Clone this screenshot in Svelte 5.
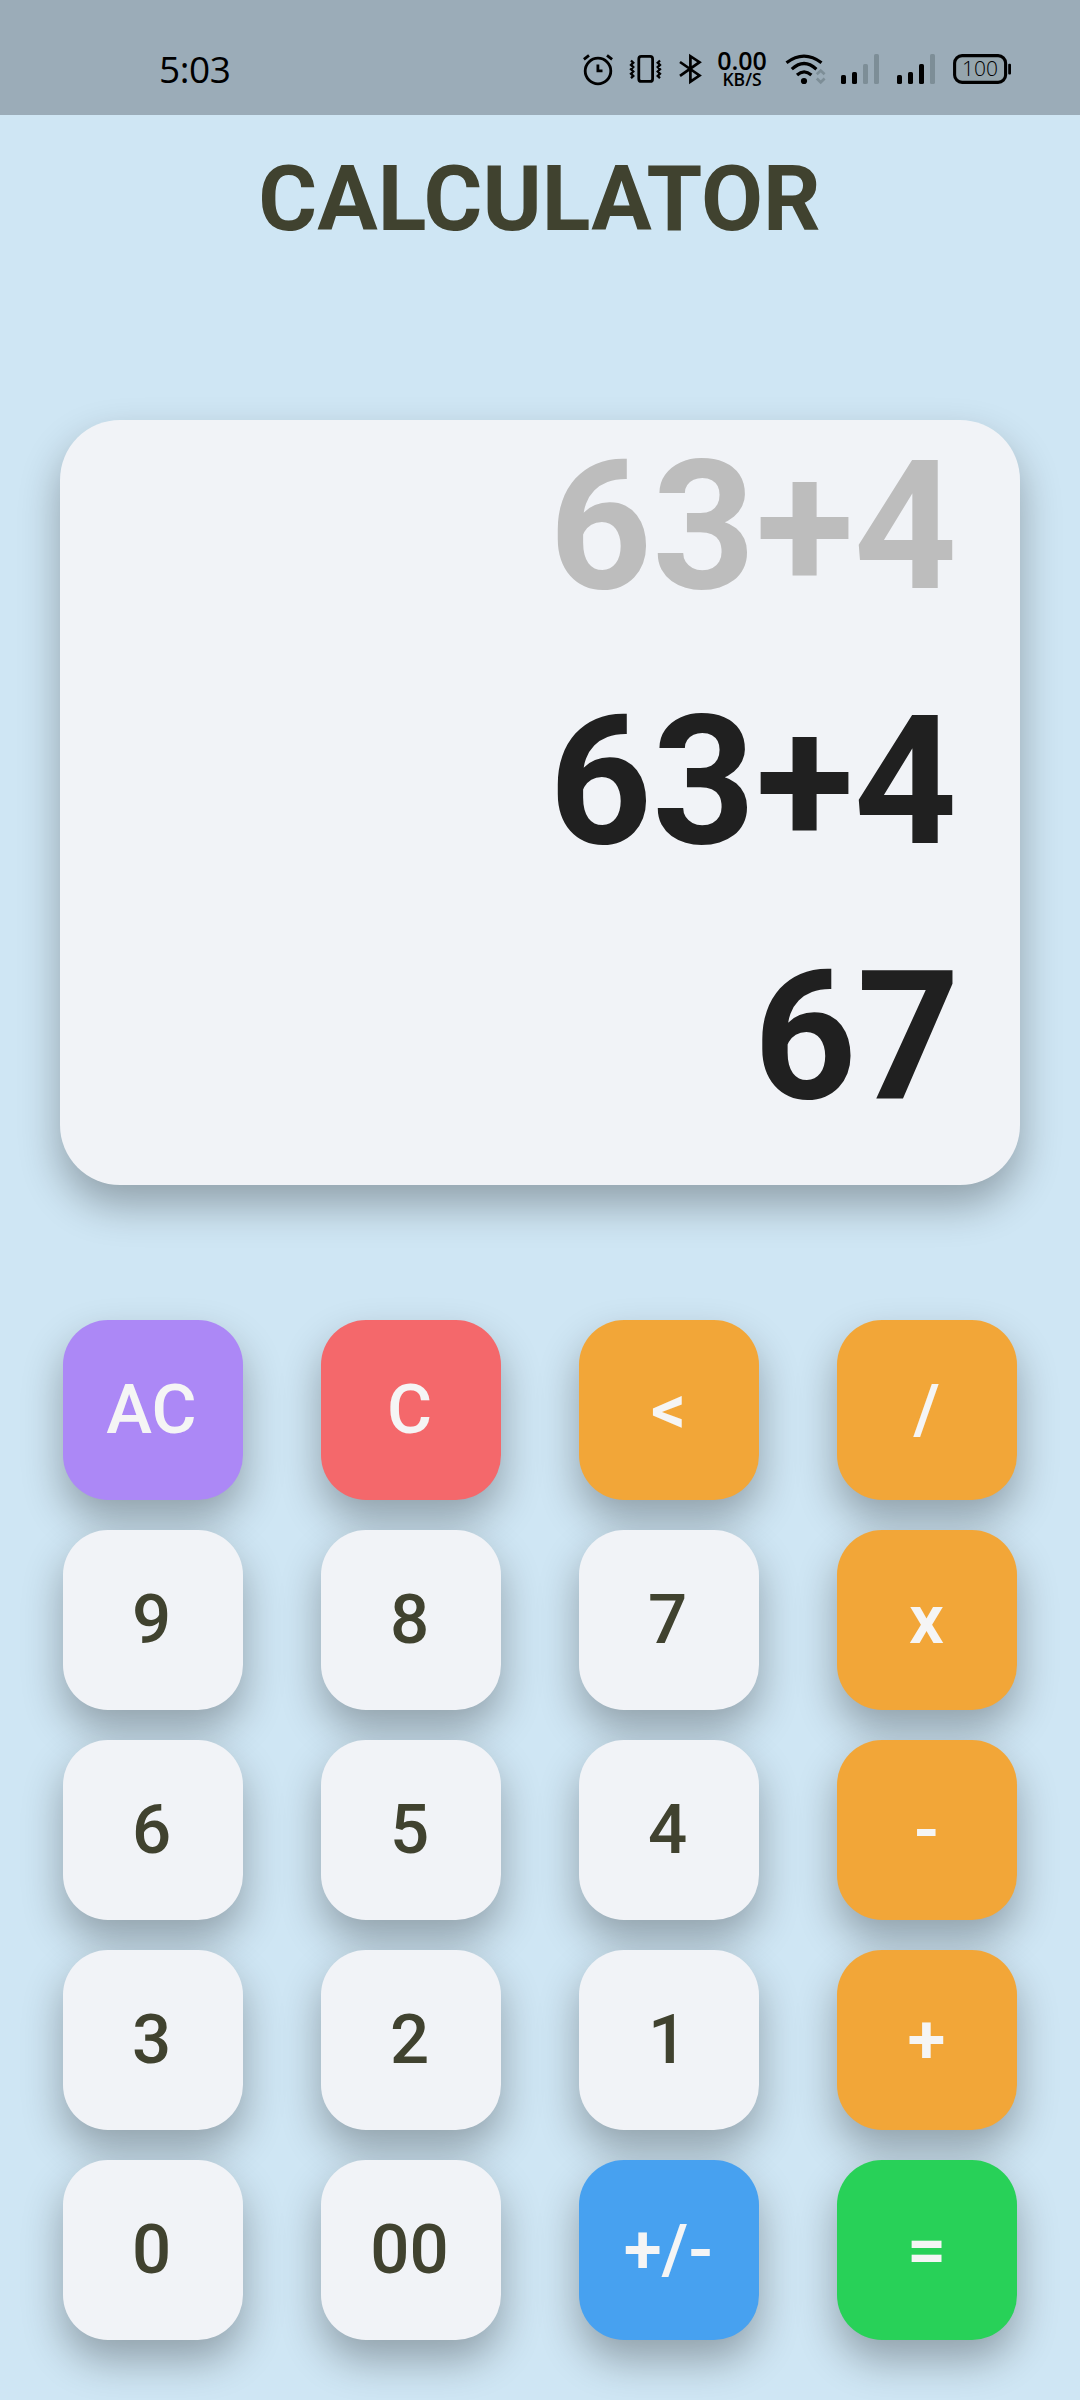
<script>
  let history = $state('63+4');
  let expression = $state('63+4');
  let result = $state('67');

  const keys = [
    { label: 'AC', kind: 'violet' },
    { label: 'C', kind: 'red' },
    { label: '<', kind: 'orange' },
    { label: '/', kind: 'orange' },
    { label: '9' }, { label: '8' }, { label: '7' },
    { label: 'x', kind: 'orange' },
    { label: '6' }, { label: '5' }, { label: '4' },
    { label: '-', kind: 'orange' },
    { label: '3' }, { label: '2' }, { label: '1' },
    { label: '+', kind: 'orange' },
    { label: '0' }, { label: '00' },
    { label: '+/-', kind: 'blue' },
    { label: '=', kind: 'green' }
  ];

  const bars = [
    { x: 0, y: 22 },
    { x: 11, y: 19 },
    { x: 22, y: 11 },
    { x: 33, y: 1 }
  ];
</script>

{#snippet signal(level)}
  <svg class="signal" width="38" height="32" viewBox="0 0 38 32">
    {#each bars as bar, i}
      <rect x={bar.x} y={bar.y} width="5" height={31 - bar.y} rx="1.6" fill={i < level ? '#000' : '#7d8e97'} />
    {/each}
  </svg>
{/snippet}

<div class="screen">
  <header class="status">
    <span class="time">5:03</span>
    <div class="icons">
      <svg width="30" height="32" viewBox="0 0 30 32" fill="none" stroke="#000" stroke-width="2.8">
        <circle cx="15" cy="18" r="12.8" />
        <path d="M.9 6.4 6 2.4M29.1 6.4 24 2.4M14.9 11.5v6.3h4.6" />
      </svg>
      <svg class="vibrate" width="33" height="32" viewBox="0 0 33 32" fill="none" stroke="#000">
        <rect x="9.8" y="3.4" width="13.8" height="25" rx="2.5" stroke-width="2.8" />
        <path d="M2 7.5l2.3 2.2L2 11.9l2.3 2.2L2 16.3l2.3 2.2L2 20.7l2.3 2.2L2 25.1M31 7.5l-2.3 2.2 2.3 2.2-2.3 2.2 2.3 2.2-2.3 2.2 2.3 2.2-2.3 2.2 2.3 2.2" stroke-width="2.3" />
      </svg>
      <svg class="bluetooth" width="23" height="32" viewBox="0 0 23 32" fill="none" stroke="#000" stroke-width="2.7">
        <path d="M1 9 20.5 22.5 11.4 28.6V3.2L20.5 9.2 1 22.8" />
      </svg>
      <div class="speed">
        <span class="rate">0.00</span>
        <span class="unit">KB/S</span>
      </div>
      <svg class="wifi" width="41" height="32" viewBox="0 0 41 32" fill="none" stroke="#000" stroke-width="3.2">
        <path d="M1.5 9.8Q19-3.4 36.5 9.8M6.8 16.2Q19 4.8 31.4 16.2M12 22Q19 15.6 26.4 22" />
        <circle cx="19" cy="28" r="3.1" fill="#000" stroke="none" />
        <path d="M31.8 21.2l3.9-3.7 3.9 3.7M31.8 25.6l3.9 3.7 3.9-3.7" stroke="#7d8e97" stroke-width="2.7" />
      </svg>
      {@render signal(2)}
      {@render signal(3)}
      <svg class="battery" width="58" height="32" viewBox="0 0 58 32">
        <rect x="1.6" y="2.6" width="51" height="26.8" rx="7.5" fill="#95a5ad" stroke="#000" stroke-width="3.1" />
        <rect x="55.2" y="10.7" width="2.8" height="10.8" rx="1" />
        <text x="9" y="23" font-size="21" font-weight="350" textLength="36" lengthAdjust="spacingAndGlyphs">100</text>
      </svg>
    </div>
  </header>

  <h1>CALCULATOR</h1>

  <section class="display">
    <div class="line past">{history}</div>
    <div class="line">{expression}</div>
    <div class="line result">{result}</div>
  </section>

  <main class="keypad">
    {#each keys as key}
      <button class={key.kind ?? 'digit'}>{key.label}</button>
    {/each}
  </main>
</div>

<style>
  :global(body) {
    background: #cfe6f4;
  }

  .screen {
    width: 1080px;
    height: 2400px;
    overflow: hidden;
    display: flex;
    flex-direction: column;
    background: #cfe6f4;
    font-family: Roboto, 'Liberation Sans', sans-serif;
  }

  .status {
    box-sizing: border-box;
    flex: none;
    height: 115px;
    padding: 23px 69px 0 159px;
    display: flex;
    align-items: center;
    justify-content: space-between;
    background: #9bacb8;
    color: #000;
    font-family: 'Open Sans', 'Noto Sans', sans-serif;
  }

  .time {
    font-size: 37px;
    line-height: 50px;
    letter-spacing: -0.4px;
  }

  .icons {
    display: flex;
    align-items: center;
  }

  .icons svg {
    display: block;
    overflow: visible;
  }

  .speed {
    width: 54px;
    margin: 0 -1px 0 13px;
    display: flex;
    flex-direction: column;
    align-items: center;
    font-weight: 600;
  }

  .rate {
    font-size: 25px;
    line-height: 20px;
  }

  .unit {
    font-size: 17.5px;
    line-height: 18px;
  }

  .vibrate { margin-left: 16px; }
  .bluetooth { margin-left: 17px; }
  .wifi { margin-left: 17px; }
  .signal { margin-left: 15px; }
  .signal + .signal, .battery { margin-left: 18px; }

  h1 {
    flex: none;
    margin: 32px 1px 0 0;
    height: 106px;
    line-height: 106px;
    text-align: center;
    font-size: 90px;
    font-weight: 700;
    color: #40422f;
  }

  .display {
    box-sizing: border-box;
    flex: none;
    height: 765px;
    margin: 167px 60px 0;
    padding-right: 63px;
    border-radius: 60px;
    background: #f1f3f7;
    box-shadow: 0 20px 40px rgba(0, 0, 0, 0.3);
  }

  .line {
    height: 255px;
    line-height: 214px;
    text-align: right;
    font-size: 180px;
    font-weight: 700;
    color: #202020;
  }

  .past {
    color: #bdbdbd;
  }

  .result {
    margin-right: -3px;
  }

  .keypad {
    display: grid;
    grid-template-columns: repeat(4, 180px);
    grid-auto-rows: 180px;
    gap: 30px 78px;
    margin: 135px 63px 0;
  }

  button {
    border: 0;
    padding: 0 3px 0 0;
    border-radius: 45px;
    font: 500 69px/80px Roboto, 'Liberation Sans', sans-serif;
    color: #f5f5f5;
    box-shadow: 0 20px 40px rgba(0, 0, 0, 0.3);
  }

  .digit { background: #f1f3f7; color: #40422f; }
  .violet { background: #ac88f6; }
  .red { background: #f4686b; }
  .orange { background: #f2a638; padding-right: 1px; font-weight: 600; }
  .blue { background: #47a1f0; padding-right: 1px; font-weight: 600; }
  .green { background: #28d158; padding-right: 1px; font-weight: 600; }
</style>
